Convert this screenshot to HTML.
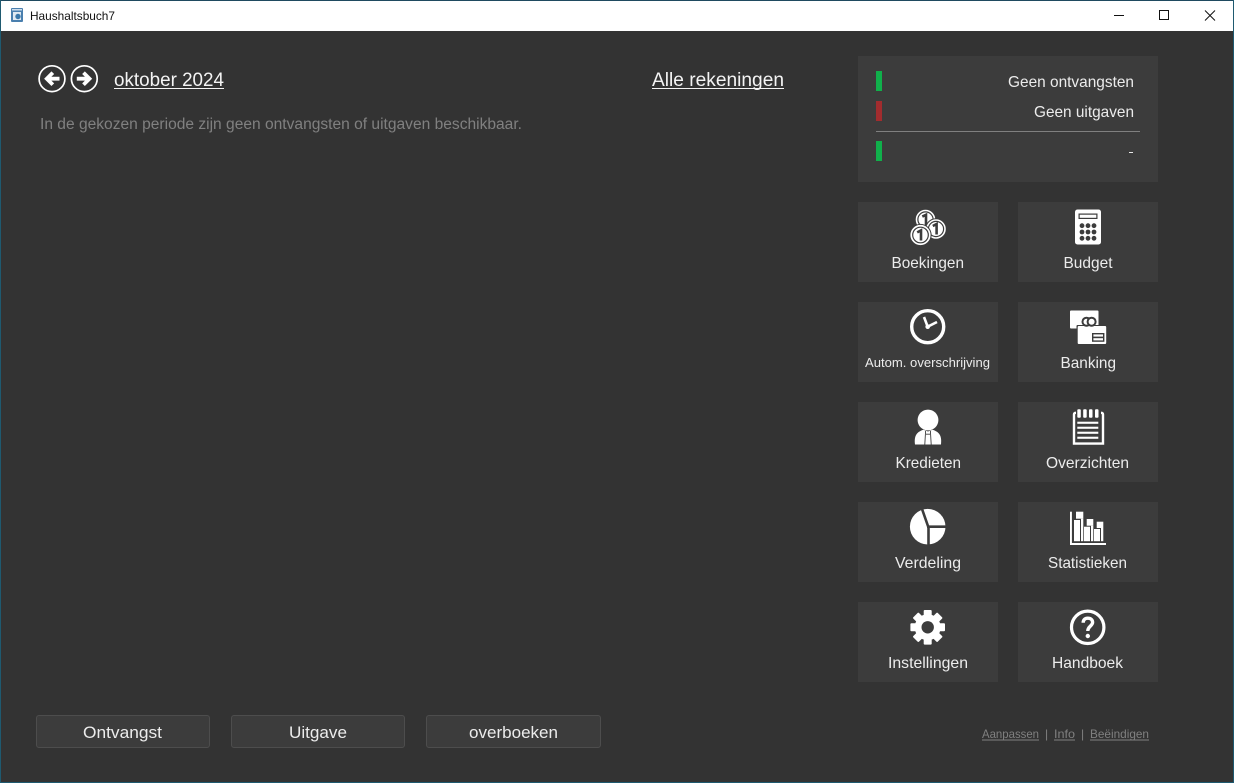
<!DOCTYPE html>
<html>
<head>
<meta charset="utf-8">
<title>Haushaltsbuch7</title>
<style>
html,body{margin:0;padding:0;width:1234px;height:783px;overflow:hidden;background:#333}
svg{display:block}
text{font-family:"Liberation Sans",sans-serif}
.l{fill:#ececec;font-size:16px}
.w{fill:#f4f4f4}
.g{fill:#808080}
.t{fill:#3c3c3c}
</style>
</head>
<body>
<svg width="1234" height="783" viewBox="0 0 1234 783" xmlns="http://www.w3.org/2000/svg">
<rect width="1234" height="783" fill="#333"/>
<!-- title bar -->
<rect x="0" y="0" width="1234" height="31" fill="#fff"/>
<rect x="0" y="0" width="1234" height="1" fill="#1f4a60"/>
<rect x="0" y="0" width="1" height="783" fill="#1f5a70"/>
<rect x="1233" y="0" width="1" height="783" fill="#1f5a70"/>
<rect x="0" y="782" width="1234" height="1" fill="#1f5a70"/>
<rect x="11" y="8" width="12" height="14" rx="1" fill="#4a7fae"/>
<rect x="13" y="12" width="8" height="8" fill="#dfe9f2"/>
<rect x="12" y="9" width="10" height="1.5" fill="#cfdfee"/>
<circle cx="18" cy="16.5" r="2.7" fill="#3b78aa"/>
<text x="30" y="20" font-size="12" fill="#111" textLength="85" lengthAdjust="spacingAndGlyphs">Haushaltsbuch7</text>
<rect x="1114" y="15" width="10" height="1" fill="#111"/>
<rect x="1159.5" y="10.5" width="9" height="9" fill="none" stroke="#111"/>
<path d="M1205 10.5L1215 20.5M1215 10.5L1205 20.5" stroke="#111" stroke-width="1" fill="none"/>

<!-- navigation arrows -->
<g fill="none" stroke="#fff">
<circle cx="52" cy="78.7" r="12.9" stroke-width="1.7"/>
<circle cx="84.3" cy="78.7" r="12.9" stroke-width="1.7"/>
<path d="M59.5 78.7H47.5M52.8 72.7L46.8 78.7L52.8 84.7" stroke-width="3.8"/>
<path d="M76.8 78.7H88.8M83.5 72.7L89.5 78.7L83.5 84.7" stroke-width="3.8"/>
</g>
<text class="w" x="114" y="86" font-size="19" textLength="110" lengthAdjust="spacingAndGlyphs">oktober 2024</text>
<rect x="114" y="88" width="110" height="1" fill="#f4f4f4"/>
<text class="w" x="652" y="86" font-size="19" textLength="132" lengthAdjust="spacingAndGlyphs">Alle rekeningen</text>
<rect x="652" y="88" width="132" height="1" fill="#f4f4f4"/>
<text class="g" x="40" y="129" font-size="15.5" textLength="482" lengthAdjust="spacingAndGlyphs">In de gekozen periode zijn geen ontvangsten of uitgaven beschikbaar.</text>

<!-- summary panel -->
<rect class="t" x="858" y="56" width="300" height="126"/>
<rect x="876" y="71" width="6" height="20" fill="#10b04b"/>
<rect x="876" y="101" width="6" height="20" fill="#a22c2e"/>
<rect x="876" y="141" width="6" height="20" fill="#10b04b"/>
<rect x="876" y="131" width="264" height="1" fill="#808080"/>
<text class="l" x="1008" y="87" textLength="126" lengthAdjust="spacingAndGlyphs">Geen ontvangsten</text>
<text class="l" x="1034" y="117" textLength="100" lengthAdjust="spacingAndGlyphs">Geen uitgaven</text>
<rect x="1129" y="152" width="4" height="1" fill="#e8e8e8"/>

<!-- tiles -->
<rect class="t" x="858" y="202" width="140" height="80"/>
<rect class="t" x="1018" y="202" width="140" height="80"/>
<rect class="t" x="858" y="302" width="140" height="80"/>
<rect class="t" x="1018" y="302" width="140" height="80"/>
<rect class="t" x="858" y="402" width="140" height="80"/>
<rect class="t" x="1018" y="402" width="140" height="80"/>
<rect class="t" x="858" y="502" width="140" height="80"/>
<rect class="t" x="1018" y="502" width="140" height="80"/>
<rect class="t" x="858" y="602" width="140" height="80"/>
<rect class="t" x="1018" y="602" width="140" height="80"/>

<text class="l" x="891.5" y="268" textLength="72.5" lengthAdjust="spacingAndGlyphs">Boekingen</text>
<text class="l" x="1063.5" y="268" textLength="49" lengthAdjust="spacingAndGlyphs">Budget</text>
<text class="l" x="865" y="367" style="font-size:13px" textLength="125" lengthAdjust="spacingAndGlyphs">Autom. overschrijving</text>
<text class="l" x="1060.5" y="368" textLength="55.5" lengthAdjust="spacingAndGlyphs">Banking</text>
<text class="l" x="895.5" y="468" textLength="65.5" lengthAdjust="spacingAndGlyphs">Kredieten</text>
<text class="l" x="1046" y="468" textLength="83" lengthAdjust="spacingAndGlyphs">Overzichten</text>
<text class="l" x="895" y="568" textLength="66" lengthAdjust="spacingAndGlyphs">Verdeling</text>
<text class="l" x="1048" y="568" textLength="79" lengthAdjust="spacingAndGlyphs">Statistieken</text>
<text class="l" x="888" y="668" textLength="80" lengthAdjust="spacingAndGlyphs">Instellingen</text>
<text class="l" x="1052" y="668" textLength="71" lengthAdjust="spacingAndGlyphs">Handboek</text>

<!-- coins -->
<g>
<circle cx="925.5" cy="219.5" r="10.3" fill="#fff" stroke="#3c3c3c" stroke-width="1"/>
<circle cx="925.5" cy="219.5" r="7.6" fill="none" stroke="#3c3c3c" stroke-width="1.2"/>
<path d="M922.3 216.6L926 214.8V226" fill="none" stroke="#3c3c3c" stroke-width="2.6"/>
<circle cx="936" cy="229" r="10.3" fill="#fff" stroke="#3c3c3c" stroke-width="1"/>
<circle cx="936" cy="229" r="7.6" fill="none" stroke="#3c3c3c" stroke-width="1.2"/>
<path d="M932.8 226L936.6 224V234.5" fill="none" stroke="#3c3c3c" stroke-width="2.6"/>
<circle cx="920.5" cy="235" r="10.6" fill="#fff" stroke="#3c3c3c" stroke-width="1"/>
<circle cx="920.5" cy="235" r="7.8" fill="none" stroke="#3c3c3c" stroke-width="1.2"/>
<path d="M917.2 232.4L921 230.4V240.5" fill="none" stroke="#3c3c3c" stroke-width="2.6"/>
</g>

<!-- calculator -->
<rect x="1075" y="209.5" width="26" height="35" rx="2.5" fill="#fff"/>
<rect x="1078.5" y="213.5" width="19" height="5.5" fill="#3c3c3c"/>
<rect x="1079.7" y="214.7" width="16.6" height="3.1" fill="#fff"/>
<g fill="#3c3c3c">
<circle cx="1082" cy="225.7" r="2.4"/><circle cx="1088" cy="225.7" r="2.4"/><circle cx="1094" cy="225.7" r="2.4"/>
<circle cx="1082" cy="232" r="2.4"/><circle cx="1088" cy="232" r="2.4"/><circle cx="1094" cy="232" r="2.4"/>
<circle cx="1082" cy="238.3" r="2.4"/><circle cx="1088" cy="238.3" r="2.4"/><circle cx="1094" cy="238.3" r="2.4"/>
</g>

<!-- clock -->
<circle cx="927.7" cy="326.7" r="16" fill="none" stroke="#fff" stroke-width="3.4"/>
<path d="M924 317L927.7 326.7L937 322" fill="none" stroke="#fff" stroke-width="2.6"/>
<circle cx="927.7" cy="326.7" r="2.3" fill="#fff"/>

<!-- banking -->
<rect x="1070" y="310.5" width="28.5" height="18" rx="1" fill="#fff"/>
<rect x="1076.5" y="325" width="30" height="19.5" rx="1" fill="#3c3c3c"/>
<rect x="1077.7" y="326" width="28.5" height="18" rx="1" fill="#fff"/>
<circle cx="1086.5" cy="321.7" r="4" fill="none" stroke="#3c3c3c" stroke-width="2"/>
<circle cx="1091.6" cy="321.7" r="4" fill="#fff" stroke="#3c3c3c" stroke-width="2"/>
<rect x="1092.7" y="333.7" width="11" height="7.4" fill="none" stroke="#3c3c3c" stroke-width="1.4"/>
<rect x="1092.7" y="336.6" width="11" height="1.6" fill="#3c3c3c"/>

<!-- person -->
<circle cx="928" cy="420" r="10.4" fill="#fff"/>
<path d="M915 444.5C914 436 916.5 432 923.5 429.8L928 431.5L932.5 429.8C939.5 432 942 436 941 444.5Z" fill="#fff"/>
<path d="M925.6 431L924.8 444.5M930.4 431L931.2 444.5M926 434.2H930" stroke="#3c3c3c" stroke-width="0.9" fill="none"/>

<!-- notepad -->
<path d="M1074 414.5V443.6H1103V414.5Q1103 412.8 1101 412.8M1074 414.5Q1074 412.8 1076 412.8" fill="none" stroke="#fff" stroke-width="2.4"/>
<g fill="#fff">
<rect x="1077.3" y="409.3" width="3.5" height="8.4" rx="1"/>
<rect x="1083.2" y="409.3" width="3.5" height="8.4" rx="1"/>
<rect x="1089" y="409.3" width="3.5" height="8.4" rx="1"/>
<rect x="1095" y="409.3" width="3.5" height="8.4" rx="1"/>
<rect x="1077.3" y="421.7" width="21" height="2.1"/>
<rect x="1077.3" y="426.7" width="21" height="2.1"/>
<rect x="1077.3" y="431.7" width="21" height="2.1"/>
<rect x="1077.3" y="436.7" width="21" height="2.1"/>
</g>

<!-- pie -->
<circle cx="927.7" cy="526.7" r="17.8" fill="#fff"/>
<path d="M928.5 527.5L921.5 507.5M927 526.7H947M928.5 526V546" stroke="#3c3c3c" stroke-width="2.6" fill="none"/>

<!-- stats -->
<g fill="#fff">
<rect x="1070" y="511.7" width="1.9" height="33.3"/>
<rect x="1070" y="543" width="36" height="2"/>
<rect x="1076" y="511.7" width="7.3" height="7"/>
<rect x="1081" y="518.7" width="2.3" height="22.5"/>
<rect x="1074" y="520" width="6" height="21.2"/>
<rect x="1086.7" y="519" width="6.6" height="6.7"/>
<rect x="1091" y="525.7" width="2.3" height="15.5"/>
<rect x="1084" y="526.7" width="6" height="14.5"/>
<rect x="1096.7" y="521.7" width="6.6" height="6.3"/>
<rect x="1101" y="528" width="2.3" height="13.2"/>
<rect x="1094" y="529" width="6" height="12.2"/>
</g>

<!-- gear -->
<g transform="translate(927.7 627.3)">
<g fill="#fff">
<rect x="-4" y="-17.3" width="8" height="34.6" rx="1"/>
<rect x="-4" y="-17.3" width="8" height="34.6" rx="1" transform="rotate(45)"/>
<rect x="-4" y="-17.3" width="8" height="34.6" rx="1" transform="rotate(90)"/>
<rect x="-4" y="-17.3" width="8" height="34.6" rx="1" transform="rotate(135)"/>
<circle r="13"/>
</g>
<circle r="6.2" fill="#3c3c3c"/>
</g>

<!-- help -->
<circle cx="1087.7" cy="627.3" r="16.2" fill="none" stroke="#fff" stroke-width="3.2"/>
<path d="M1083.2 622.8C1083.2 619.6 1085.2 618.2 1087.8 618.2C1090.8 618.2 1092.6 620 1092.6 622.4C1092.6 625.8 1087.8 626.4 1087.8 631" fill="none" stroke="#fff" stroke-width="3.4"/>
<circle cx="1087.8" cy="636" r="2.2" fill="#fff"/>

<!-- bottom buttons -->
<g fill="#3c3c3c" stroke="#4d4d4d">
<rect x="36.5" y="715.5" width="173" height="32" rx="2.5"/>
<rect x="231.5" y="715.5" width="173" height="32" rx="2.5"/>
<rect x="426.5" y="715.5" width="174" height="32" rx="2.5"/>
</g>
<text class="l" x="83" y="738" style="font-size:17px" textLength="79" lengthAdjust="spacingAndGlyphs">Ontvangst</text>
<text class="l" x="289" y="738" style="font-size:17px" textLength="58" lengthAdjust="spacingAndGlyphs">Uitgave</text>
<text class="l" x="469" y="738" style="font-size:17px" textLength="89" lengthAdjust="spacingAndGlyphs">overboeken</text>

<!-- links -->
<text class="g" x="982" y="738" font-size="12" textLength="57" lengthAdjust="spacingAndGlyphs">Aanpassen</text>
<rect x="982" y="739.5" width="57" height="1" fill="#808080"/>
<text class="g" x="1045" y="738" font-size="12">|</text>
<text class="g" x="1054" y="738" font-size="12" textLength="21" lengthAdjust="spacingAndGlyphs">Info</text>
<rect x="1054" y="739.5" width="21" height="1" fill="#808080"/>
<text class="g" x="1081" y="738" font-size="12">|</text>
<text class="g" x="1090" y="738" font-size="12" textLength="59" lengthAdjust="spacingAndGlyphs">Beëindigen</text>
<rect x="1090" y="739.5" width="59" height="1" fill="#808080"/>
</svg>
</body>
</html>
